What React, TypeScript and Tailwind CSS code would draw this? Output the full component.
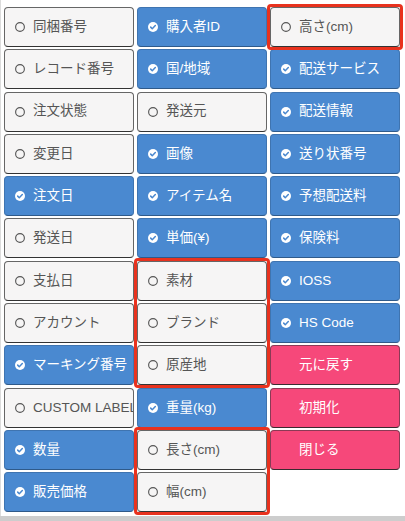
import React from 'react';

type Item = { label: string; on?: boolean; pink?: boolean };
type Group = { items: Item[]; red?: boolean };

const columns: Group[][] = [
  [
    {
      items: [
        { label: '同梱番号' },
        { label: 'レコード番号' },
        { label: '注文状態' },
        { label: '変更日' },
        { label: '注文日', on: true },
        { label: '発送日' },
        { label: '支払日' },
        { label: 'アカウント' },
        { label: 'マーキング番号', on: true },
        { label: 'CUSTOM LABEL' },
        { label: '数量', on: true },
        { label: '販売価格', on: true },
      ],
    },
  ],
  [
    {
      items: [
        { label: '購入者ID', on: true },
        { label: '国/地域', on: true },
        { label: '発送元' },
        { label: '画像', on: true },
        { label: 'アイテム名', on: true },
        { label: '単価(¥)', on: true },
      ],
    },
    { red: true, items: [{ label: '素材' }, { label: 'ブランド' }, { label: '原産地' }] },
    { items: [{ label: '重量(kg)', on: true }] },
    { red: true, items: [{ label: '長さ(cm)' }, { label: '幅(cm)' }] },
  ],
  [
    { red: true, items: [{ label: '高さ(cm)' }] },
    {
      items: [
        { label: '配送サービス', on: true },
        { label: '配送情報', on: true },
        { label: '送り状番号', on: true },
        { label: '予想配送料', on: true },
        { label: '保険料', on: true },
        { label: 'IOSS', on: true },
        { label: 'HS Code', on: true },
        { label: '元に戻す', pink: true },
        { label: '初期化', pink: true },
        { label: '閉じる', pink: true },
      ],
    },
  ],
];

function CheckIcon() {
  return (
    <svg viewBox="0 0 16 16" className="w-[10px] h-[10px] shrink-0">
      <circle cx="8" cy="8" r="8" fill="#ffffff" />
      <path d="M4.3 8.2l2.5 2.5 4.9-5" fill="none" stroke="#4a88cf" strokeWidth="2.4" strokeLinecap="round" strokeLinejoin="round" />
    </svg>
  );
}

function EmptyIcon() {
  return (
    <svg viewBox="0 0 16 16" className="w-[10px] h-[10px] shrink-0">
      <circle cx="8" cy="8" r="7" fill="none" stroke="#555555" strokeWidth="1.8" />
    </svg>
  );
}

function FieldButton({ item }: { item: Item }) {
  if (item.pink) {
    return (
      <button className="h-[40px] w-full flex items-center pl-[28px] rounded-[4px] border border-[#8a3a55] border-b-[#3a2a30] bg-[#f6487a] text-white text-[13.5px] whitespace-nowrap overflow-hidden">
        {item.label}
      </button>
    );
  }
  return (
    <button
      className={
        item.on
          ? 'h-[40px] w-full flex items-center gap-[8px] pl-[10px] rounded-[4px] border border-[#3f74b0] border-b-[#2f5a8a] bg-[#4a89d0] text-white text-[13.5px] whitespace-nowrap overflow-hidden'
          : 'h-[40px] w-full flex items-center gap-[8px] pl-[10px] rounded-[4px] border border-[#666] border-b-[#333] bg-[#f6f5f5] text-[#555] text-[13.5px] whitespace-nowrap overflow-hidden'
      }
    >
      {item.on ? <CheckIcon /> : <EmptyIcon />}
      <span>{item.label}</span>
    </button>
  );
}

export default function App() {
  return (
    <div className="w-[405px] h-[521px] bg-[#cdcdcd] overflow-hidden font-['Liberation_Sans','Noto_Sans_CJK_JP',sans-serif]">
      <div className="h-[516px] bg-white border-l border-[#dcdcdc] pl-[3px] pt-[7px] flex gap-[3px]">
        {columns.map((col, ci) => (
          <div key={ci} className="w-[130px] flex flex-col gap-[2.3px]">
            {col.map((group, gi) => (
              <div
                key={gi}
                className={
                  group.red
                    ? 'flex flex-col gap-[2.3px] outline-3 outline-solid outline-[#e8321e] outline-offset-0 rounded-[1px] relative z-10'
                    : 'flex flex-col gap-[2.3px]'
                }
              >
                {group.items.map((item) => (
                  <FieldButton key={item.label} item={item} />
                ))}
              </div>
            ))}
          </div>
        ))}
      </div>
    </div>
  );
}
